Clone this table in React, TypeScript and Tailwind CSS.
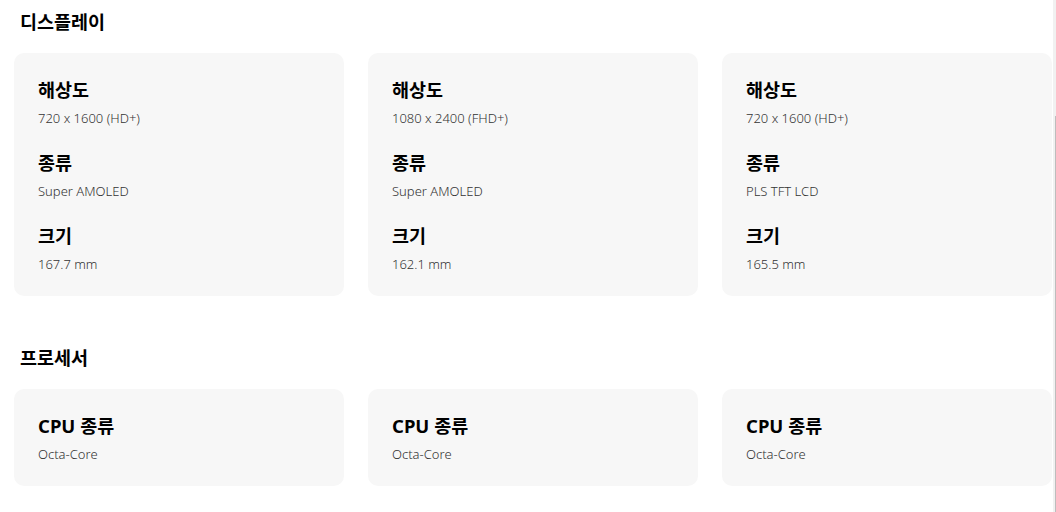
import React from 'react';

type Spec = { label: string; value: string };

const display: Spec[][] = [
  [
    { label: '해상도', value: '720 x 1600 (HD+)' },
    { label: '종류', value: 'Super AMOLED' },
    { label: '크기', value: '167.7 mm' },
  ],
  [
    { label: '해상도', value: '1080 x 2400 (FHD+)' },
    { label: '종류', value: 'Super AMOLED' },
    { label: '크기', value: '162.1 mm' },
  ],
  [
    { label: '해상도', value: '720 x 1600 (HD+)' },
    { label: '종류', value: 'PLS TFT LCD' },
    { label: '크기', value: '165.5 mm' },
  ],
];

const processor: Spec[][] = [
  [{ label: 'CPU 종류', value: 'Octa-Core' }],
  [{ label: 'CPU 종류', value: 'Octa-Core' }],
  [{ label: 'CPU 종류', value: 'Octa-Core' }],
];

const SpecCard: React.FC<{ specs: Spec[] }> = ({ specs }) => (
  <div className="bg-[#f7f7f7] rounded-[10px] px-6 pt-6 pb-[22px] flex flex-col gap-[22px]">
    {specs.map((s, i) => (
      <div key={i} className="flex flex-col">
        <div className="text-[18.5px] leading-[26px] font-bold text-black">{s.label}</div>
        <div className="mt-[5px] text-[13px] leading-[20px] font-light text-[#333]">{s.value}</div>
      </div>
    ))}
  </div>
);

const Section: React.FC<{ title: string; cards: Spec[][] }> = ({ title, cards }) => (
  <section className="flex flex-col">
    <h2 className="pl-5 text-[18.5px] leading-[28px] font-bold text-black">{title}</h2>
    <div className="mt-[17px] pl-[14px] grid grid-cols-3 gap-6">
      {cards.map((c, i) => (
        <SpecCard key={i} specs={c} />
      ))}
    </div>
  </section>
);

export default function App() {
  return (
    <div
      className="flex w-[1056px] h-[512px] bg-white overflow-hidden"
      style={{ fontFamily: '"Noto Sans", "Noto Sans CJK KR", sans-serif' }}
    >
      <main className="flex-1 flex flex-col gap-12 pt-2">
        <Section title="디스플레이" cards={display} />
        <Section title="프로세서" cards={processor} />
      </main>
      {/* scrollbar */}
      <div className="w-[4px] flex">
        <div className="w-[1px]" />
        <div className="w-[2px] bg-[#f1f1f1]" />
        <div className="w-[1px] flex flex-col bg-[#f1f1f1]">
          <div className="h-[116px]" />
          <div className="flex-1 bg-[#bdbdbd]" />
        </div>
      </div>
    </div>
  );
}
